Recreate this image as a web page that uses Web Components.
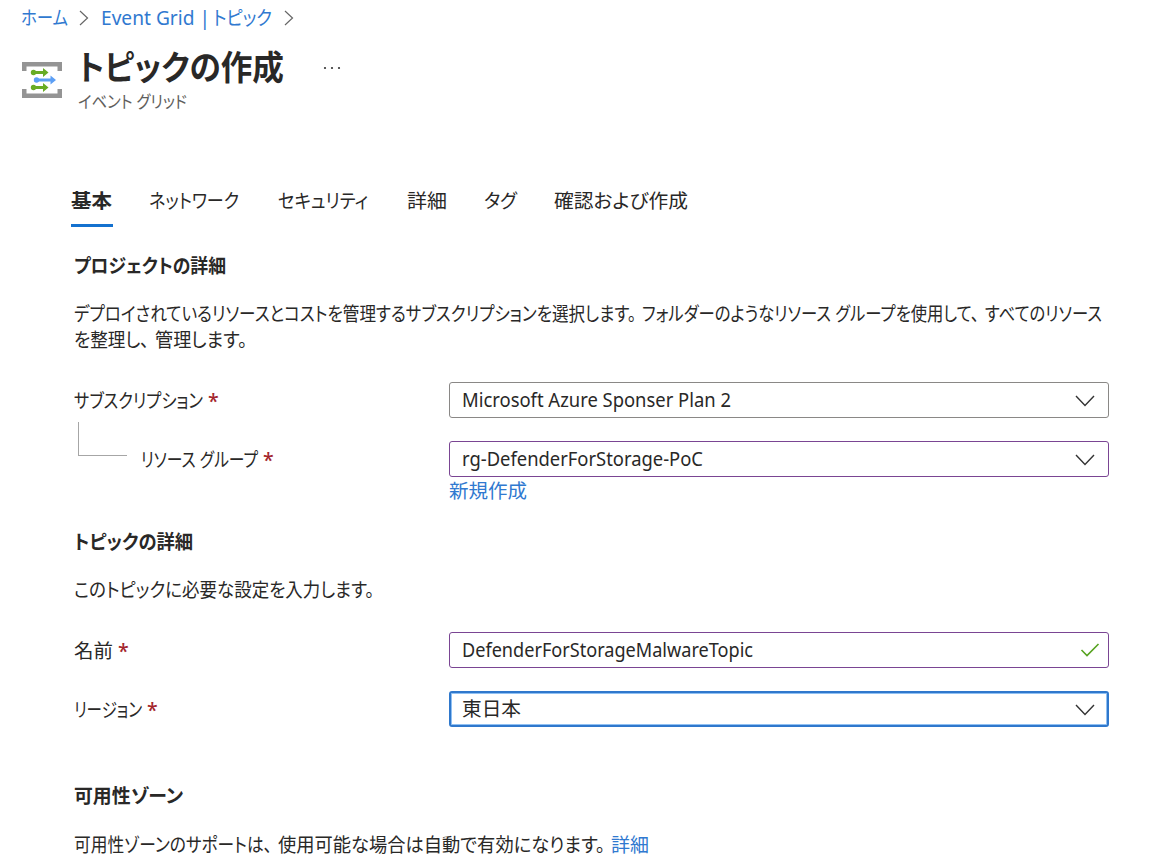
<!DOCTYPE html>
<html lang="ja">
<head>
<meta charset="utf-8">
<title>トピックの作成</title>
<style>
  body {
    margin: 0;
    width: 1168px;
    height: 866px;
    overflow: hidden;
    background: #fff;
    color: #292827;
    font-family: "Noto Sans", "Noto Sans CJK JP", sans-serif;
    font-size: 19.5px;
    line-height: 26px;
  }
</style>
</head>
<body>
<topic-create-page></topic-create-page>

<script>
// One line of text, condensed horizontally to the width attribute
class FitText extends HTMLElement {
  constructor() {
    super();

    this.attachShadow({mode: 'open'}).innerHTML = `
        <style>
          :host {
            display: inline-block;
            vertical-align: top;
            white-space: nowrap;
          }
          span {
            display: inline-block;
            transform-origin: 0 50%;
            font-feature-settings: "palt";
          }
        </style>
        <span><slot></slot></span>
    `;
  }

  connectedCallback() {
    const span = this.shadowRoot.querySelector('span');
    const width = Number(this.getAttribute('width'));
    const natural = span.getBoundingClientRect().width;
    this.style.width = `${width}px`;
    span.style.marginRight = `${width - natural}px`;
    span.style.transform = `scaleX(${width / natural})`;
  }
}

class PageBreadcrumb extends HTMLElement {
  constructor() {
    super();

    this.attachShadow({mode: 'open'}).innerHTML = `
        <style>
          :host {
            display: flex;
            align-items: center;
            height: 26px;
            padding: 5px 0 0 21px;
            color: #3079d0;
          }
          svg {
            width: 10px;
            height: 16px;
            fill: none;
            stroke: #666;
            stroke-width: 1.2;
          }
          .first {
            margin: 0 12px 0 11px;
          }
          .service {
            margin-right: 3px;
          }
          .last {
            margin-left: 12px;
          }
        </style>
        <fit-text width="47">ホーム</fit-text>
        <svg class="first" viewBox="0 0 10 16"><path d="M1 1l7.5 7L1 15"/></svg>
        <fit-text class="service" width="109">Event Grid |</fit-text>
        <fit-text width="59">トピック</fit-text>
        <svg class="last" viewBox="0 0 10 16"><path d="M1 1l7.5 7L1 15"/></svg>
    `;
  }
}

class PageTitle extends HTMLElement {
  constructor() {
    super();

    this.attachShadow({mode: 'open'}).innerHTML = `
        <style>
          :host {
            display: flex;
            height: 80px;
            padding: 15px 0 0 22px;
          }
          .icon {
            width: 40px;
            height: 37px;
            margin: 16px 16px 0 0;
          }
          h1 {
            margin: -1px 0 1px;
            font-size: 34px;
            line-height: 44px;
            font-weight: 600;
          }
          .sub {
            font-size: 17px;
            line-height: 24px;
            color: #605e5c;
          }
          .more {
            width: 20px;
            height: 4px;
            margin: 20px 0 0 39px;
            fill: #333;
          }
        </style>
        <svg class="icon" viewBox="0 0 40 37">
          <path fill="#949494" d="M0 0h40v9h-4.500V4.500H4.500V9H0zM0 36h40v-9h-4.500v4.500H4.500V27H0z"/>
          <g fill="#68ac25">
            <circle cx="11.500" cy="10.500" r="2.700"/>
            <path d="M11 9h10V6l5.500 4.500L21 15v-3H11z"/>
            <circle cx="11.500" cy="25.500" r="2.700"/>
            <path d="M11 24h10v-3l5.500 4.500-5.500 4.500v-3H11z"/>
          </g>
          <g fill="#5c9ff5">
            <circle cx="14.500" cy="18" r="2.700"/>
            <path d="M14 16.500h14.500v-3L34 18l-5.500 4.500v-3H14z"/>
          </g>
        </svg>
        <div>
          <h1><fit-text width="206"><slot></slot></fit-text></h1>
          <div class="sub"><fit-text width="109">イベント グリッド</fit-text></div>
        </div>
        <svg class="more" viewBox="0 0 20 4">
          <circle cx="2" cy="2" r="1.100"/><circle cx="9" cy="2" r="1.100"/><circle cx="16" cy="2" r="1.100"/>
        </svg>
    `;
  }
}

class TabList extends HTMLElement {
  constructor() {
    super();

    this.attachShadow({mode: 'open'}).innerHTML = `
        <style>
          :host {
            display: flex;
            gap: 36px;
            padding: 62px 0 0 71px;
          }
          .tab {
            height: 36px;
            padding-right: 1px;
            border-bottom: 3px solid transparent;
          }
          .wide {
            padding-right: 3px;
          }
          .active {
            font-weight: 600;
            border-color: #1471cf;
          }
        </style>
        <div class="tab active"><fit-text width="41">基本</fit-text></div>
        <div class="tab wide"><fit-text width="90">ネットワーク</fit-text></div>
        <div class="tab wide"><fit-text width="90">セキュリティ</fit-text></div>
        <div class="tab"><fit-text width="40">詳細</fit-text></div>
        <div class="tab"><fit-text width="33">タグ</fit-text></div>
        <div class="tab"><fit-text width="134">確認および作成</fit-text></div>
    `;
  }
}

class FormSection extends HTMLElement {
  constructor() {
    super();

    this.attachShadow({mode: 'open'}).innerHTML = `
        <style>
          :host {
            display: block;
            padding-left: 74px;
          }
          h2 {
            margin: 0 0 22px;
            padding-top: 1px;
            font-size: inherit;
            line-height: 26px;
            font-weight: 600;
          }
          .description {
            margin-bottom: 29px;
          }
        </style>
        <h2>
          <fit-text width="${this.getAttribute('heading-width')}">${this.getAttribute('heading')}</fit-text>
        </h2>
        <div class="description"><slot name="description"></slot></div>
        <slot></slot>
    `;
  }
}

class FormField extends HTMLElement {
  constructor() {
    super();

    const icon = this.getAttribute('icon') === 'check'
      ? '<svg class="check" viewBox="0 0 20 14"><path d="M1.500 7l5.500 5.500L18.500 1"/></svg>'
      : '<svg viewBox="0 0 20 12"><path d="M1 1l9 9.500L19 1"/></svg>';

    this.attachShadow({mode: 'open'}).innerHTML = `
        <style>
          :host {
            display: flex;
            height: 36px;
            margin-bottom: 23px;
          }
          .label {
            display: flex;
            box-sizing: border-box;
            width: 375px;
            padding-top: 1px;
            line-height: 36px;
          }
          .required {
            margin-left: 5px;
            color: #a4262c;
            font-weight: 500;
          }
          .branch {
            width: 48px;
            height: 33px;
            margin: -20px 14px 0 4px;
            border: solid #a6a6a6;
            border-width: 0 0 1px 1px;
          }
          .box {
            display: flex;
            align-items: center;
            justify-content: space-between;
            box-sizing: border-box;
            width: 660px;
            height: 36px;
            padding: 0 12px;
            border: 1px solid #8a8886;
            border-radius: 3px;
          }
          :host([state="dirty"]) .box {
            border-color: #7a4593;
          }
          :host([state="focus"]) .box {
            border: 2px solid #2f78cc;
            box-shadow: inset 0 0 0 1px #8fc0f3;
            padding: 0 11px;
          }
          svg {
            width: 20px;
            height: 12px;
            margin: 2px 1px 0 0;
            fill: none;
            stroke: #333;
            stroke-width: 1.400;
          }
          .check {
            height: 14px;
            margin: 0 -4px 0 0;
            stroke: #57a321;
            stroke-width: 1.600;
          }
        </style>
        <div class="label">
          ${this.hasAttribute('nested') ? '<div class="branch"></div>' : ''}
          <fit-text width="${this.getAttribute('label-width')}">${this.getAttribute('label')}</fit-text>
          <span class="required">*</span>
        </div>
        <div class="box">
          <fit-text width="${this.getAttribute('value-width')}">${this.getAttribute('value')}</fit-text>
          ${icon}
        </div>
    `;
  }
}

class TopicCreatePage extends HTMLElement {
  constructor() {
    super();

    this.attachShadow({mode: 'open'}).innerHTML = `
        <style>
          :host {
            display: block;
          }
          .project {
            margin-top: 25px;
          }
          .line {
            display: flex;
            gap: 6px;
          }
          .new {
            height: 26px;
            margin: -22px 0 24px 375px;
          }
          .zone {
            margin-top: 55px;
          }
          .zone .line {
            padding-top: 1px;
          }
          .link {
            color: #3079d0;
          }
        </style>
        <page-breadcrumb></page-breadcrumb>
        <page-title>トピックの作成</page-title>
        <tab-list></tab-list>
        <form-section class="project" heading="プロジェクトの詳細" heading-width="152">
          <div slot="description">
            <div class="line">
              <fit-text width="562">デプロイされているリソースとコストを管理するサブスクリプションを選択します。</fit-text>
              <fit-text width="337">フォルダーのようなリソース グループを使用して、</fit-text>
              <fit-text width="117">すべてのリソース</fit-text>
            </div>
            <div class="line">
              <fit-text width="75">を整理し、</fit-text>
              <fit-text width="92">管理します。</fit-text>
            </div>
          </div>
          <form-field label="サブスクリプション" label-width="129" value="Microsoft Azure Sponser Plan 2" value-width="269"></form-field>
          <form-field nested label="リソース グループ" label-width="117" value="rg-DefenderForStorage-PoC" value-width="241" state="dirty"></form-field>
          <div class="new link"><fit-text width="78">新規作成</fit-text></div>
        </form-section>
        <form-section heading="トピックの詳細" heading-width="119">
          <fit-text slot="description" width="300">このトピックに必要な設定を入力します。</fit-text>
          <form-field label="名前" label-width="39" value="DefenderForStorageMalwareTopic" value-width="291" state="dirty" icon="check"></form-field>
          <form-field label="リージョン" label-width="68" value="東日本" value-width="59" state="focus"></form-field>
        </form-section>
        <form-section class="zone" heading="可用性ゾーン" heading-width="109">
          <div class="line" slot="description">
            <fit-text width="198">可用性ゾーンのサポートは、</fit-text>
            <fit-text width="327">使用可能な場合は自動で有効になります。</fit-text>
            <fit-text class="link" width="38">詳細</fit-text>
          </div>
        </form-section>
    `;
  }
}

customElements.define('fit-text', FitText);
customElements.define('page-breadcrumb', PageBreadcrumb);
customElements.define('page-title', PageTitle);
customElements.define('tab-list', TabList);
customElements.define('form-section', FormSection);
customElements.define('form-field', FormField);
customElements.define('topic-create-page', TopicCreatePage);
</script>
</body>
</html>
